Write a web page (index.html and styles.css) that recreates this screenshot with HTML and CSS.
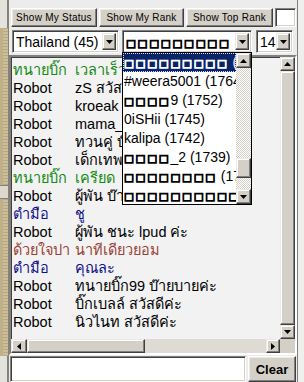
FILE: index.html
```html
<!DOCTYPE html>
<html lang="th">
<head>
    <meta charset="UTF-8">
    <meta name="viewport" content="width=device-width, initial-scale=1.0">
    <title>ห้องสนทนา</title>
    <link rel="stylesheet" href="styles.css">
</head>
<body>
    <div id="window">
        <!-- left splitter strip -->
        <div class="side-left">
            <div class="side-cap"></div>
            <div class="side-fill"></div>
            <div class="side-grip"></div>
            <div class="side-fill"></div>
            <div class="side-cap side-cap-bottom"></div>
        </div>

        <div id="main">
            <!-- top buttons -->
            <div class="toolbar">
                <button class="btn btn-status">Show My Status</button>
                <button class="btn btn-rank">Show My Rank</button>
                <button class="btn btn-top">Show Top Rank</button>
                <div class="field field-small"></div>
            </div>

            <!-- room / player / font size -->
            <div class="select-row">
                <div class="combo combo-country">
                    <span class="combo-text">Thailand (45)</span>
                    <span class="combo-arrow"><svg width="7" height="4" viewBox="0 0 7 4"><polygon points="0,0 7,0 3.5,4" fill="#000"/></svg></span>
                </div>
                <div class="combo combo-player">
                    <span class="combo-text"><span class="tofu">□□□□□□□□□</span> (1764)</span>
                    <span class="combo-arrow"><svg width="7" height="4" viewBox="0 0 7 4"><polygon points="0,0 7,0 3.5,4" fill="#000"/></svg></span>

                    <!-- open dropdown -->
                    <div class="droplist">
                        <div class="drop-items">
                            <div class="drop-item selected"><span class="tofu">□□□□□□□□□</span> (1770)</div>
                            <div class="drop-item">#weera5001 (1764)</div>
                            <div class="drop-item"><span class="tofu">□□□□</span>9 (1752)</div>
                            <div class="drop-item">0iSHii (1745)</div>
                            <div class="drop-item">kalipa (1742)</div>
                            <div class="drop-item"><span class="tofu">□□□□</span>_2 (1739)</div>
                            <div class="drop-item"><span class="tofu">□□□□□□□□</span> (1712)</div>
                            <div class="drop-item"><span class="tofu">□□□□□□□□□□</span> (1700)</div>
                        </div>
                        <div class="drop-scroll">
                            <div class="sb-btn"><svg width="7" height="4" viewBox="0 0 7 4"><polygon points="3.5,0 7,4 0,4" fill="#000"/></svg></div>
                            <div class="sb-gap"></div>
                            <div class="sb-thumb drop-thumb"></div>
                            <div class="sb-gap-low"></div>
                            <div class="sb-btn"><svg width="7" height="4" viewBox="0 0 7 4"><polygon points="0,0 7,0 3.5,4" fill="#000"/></svg></div>
                        </div>
                    </div>
                </div>
                <div class="combo combo-size">
                    <span class="combo-text">14</span>
                    <span class="combo-arrow"><svg width="7" height="4" viewBox="0 0 7 4"><polygon points="0,0 7,0 3.5,4" fill="#000"/></svg></span>
                </div>
            </div>

            <!-- chat log -->
            <div class="chat">
                <div class="chat-log">
                    <div class="msg"><span class="who c-green">ทนายบิ๊ก</span><span class="say c-green">เวลาเร็ว"จัง สวัสดีค่ะ</span></div>
                    <div class="msg"><span class="who">Robot</span><span class="say">zS สวัสดีค่ะ</span></div>
                    <div class="msg"><span class="who">Robot</span><span class="say">kroeak สวัสดีค่ะ</span></div>
                    <div class="msg"><span class="who">Robot</span><span class="say">mama_s สวัสดีค่ะ</span></div>
                    <div class="msg"><span class="who">Robot</span><span class="say">ทวนคู่ บ๊ายบายค่ะ</span></div>
                    <div class="msg"><span class="who">Robot</span><span class="say">เด็กเทพอ สวัสดีค่ะ</span></div>
                    <div class="msg"><span class="who c-green">ทนายบิ๊ก</span><span class="say c-green">เครียด</span></div>
                    <div class="msg"><span class="who">Robot</span><span class="say">ผู้พัน บ๊ายบายค่ะ</span></div>
                    <div class="msg"><span class="who c-navy">ตำมือ</span><span class="say c-navy">ชู</span></div>
                    <div class="msg"><span class="who">Robot</span><span class="say">ผู้พัน ชนะ lpud ค่ะ</span></div>
                    <div class="msg"><span class="who c-brown">ด้วยใจปา</span><span class="say c-brown">นาทีเดียวยอม</span></div>
                    <div class="msg"><span class="who c-navy">ตำมือ</span><span class="say c-navy">คุณละ</span></div>
                    <div class="msg"><span class="who">Robot</span><span class="say">ทนายบิ๊ก99 บ๊ายบายค่ะ</span></div>
                    <div class="msg"><span class="who">Robot</span><span class="say">บิ๊กเบลล์ สวัสดีค่ะ</span></div>
                    <div class="msg"><span class="who">Robot</span><span class="say">นิวไนท สวัสดีค่ะ</span></div>
                </div>
                <div class="vscroll">
                    <div class="sb-btn"><svg width="7" height="4" viewBox="0 0 7 4"><polygon points="3.5,0 7,4 0,4" fill="#000"/></svg></div>
                    <div class="sb-thumb vthumb"></div>
                    <div class="sb-btn"><svg width="7" height="4" viewBox="0 0 7 4"><polygon points="0,0 7,0 3.5,4" fill="#000"/></svg></div>
                </div>
                <div class="hscroll">
                    <div class="sb-btn sb-left"><svg width="4" height="7" viewBox="0 0 4 7"><polygon points="0,3.5 4,0 4,7" fill="#000"/></svg></div>
                    <div class="sb-thumb hthumb"></div>
                    <div class="htrack"></div>
                    <div class="sb-btn sb-right"><svg width="4" height="7" viewBox="0 0 4 7"><polygon points="0,0 4,3.5 0,7" fill="#000"/></svg></div>
                </div>
                <div class="corner"></div>
            </div>

            <!-- message input -->
            <div class="input-row">
                <div class="field chat-input"></div>
                <button class="btn btn-clear">Clear</button>
            </div>
        </div>

        <div class="side-right"></div>
    </div>
</body>
</html>
```

FILE: styles.css
```css
/* page */
body {
    margin: 0;
    background: #ececec;
    font-family: "Liberation Sans", Arial, sans-serif;
    overflow: hidden;
}
#window {
    display: flex;
    width: 304px;
    height: 382px;
}

/* left splitter strip */
.side-left {
    width: 8px;
    display: flex;
    flex-direction: column;
    border-right: 1px solid #8a8170;
}
.side-fill {
    flex: 1;
    background: #cbbe98 repeating-linear-gradient(0deg, rgba(90, 70, 30, .18) 0 1px, transparent 1px 3px);
    border-left: 3px solid #bfb08a;
}
.side-cap {
    height: 28px;
    background: #e4e2dc;
    border-right: 1px solid #808080;
}
.side-cap-bottom {
    height: 26px;
}
.side-grip {
    height: 12px;
    background: #dcd8cc;
    border-top: 1px solid #808080;
    border-bottom: 1px solid #808080;
}

#main {
    width: 288px;
    display: flex;
    flex-direction: column;
}
.side-right {
    flex: 1;
    background: #efefed;
    border-left: 1px solid #808080;
}

/* classic 3d controls */
.btn {
    background: #d4d0c8;
    border: 1px solid;
    border-color: #fff #404040 #404040 #fff;
    box-shadow: inset -1px -1px #808080, inset 1px 1px #eceae6;
    font-family: "Liberation Sans", Arial, sans-serif;
    font-size: 10px;
    letter-spacing: 0.25px;
    color: #000;
    padding: 0;
}
.field {
    background: #fff;
    border: 1px solid;
    border-color: #808080 #fff #fff #808080;
    box-shadow: inset 1px 1px #404040, inset -1px -1px #d4d0c8;
    box-sizing: border-box;
}

/* top buttons */
.toolbar {
    display: flex;
    gap: 2px;
    height: 19px;
    margin: 8px 0 0 2px;
}
.btn-status { width: 86px; }
.btn-rank { width: 85px; }
.btn-top { width: 87px; }
.field-small { width: 21px; }

/* combos */
.select-row {
    display: flex;
    height: 23px;
    margin: 3px 0 0 3px;
}
.combo {
    position: relative;
    display: flex;
    flex: none;
    box-sizing: border-box;
    padding: 2px;
    background: #fff;
    border: 1px solid;
    border-color: #808080 #fff #fff #808080;
    box-shadow: inset 1px 1px #404040, inset -1px -1px #d4d0c8;
}
.combo-country { width: 107px; }
.combo-player { width: 130px; margin-left: 3px; }
.combo-size { width: 37px; margin-left: 4px; }
.combo-text {
    flex: 1;
    min-width: 0;
    font-size: 14px;
    line-height: 18px;
    padding-left: 1px;
    white-space: nowrap;
    overflow: hidden;
}
.combo-arrow,
.sb-btn {
    display: flex;
    align-items: center;
    justify-content: center;
    box-sizing: border-box;
    background: #d4d0c8;
    border: 1px solid;
    border-color: #eceae6 #404040 #404040 #eceae6;
    box-shadow: inset -1px -1px #808080, inset 1px 1px #fff;
}
.combo-arrow {
    width: 14px;
    flex: none;
}
.tofu {
    font-family: "DejaVu Sans", sans-serif;
    font-size: 10.5px;
    letter-spacing: 1.7px;
    -webkit-text-stroke: 1.1px currentColor;
}

/* open dropdown list */
.droplist {
    position: absolute;
    top: 21px;
    left: -1px;
    width: 130px;
    height: 153px;
    box-sizing: border-box;
    border: 1px solid #000;
    background: #fff;
    display: flex;
    z-index: 5;
}
.drop-items {
    flex: 1;
    min-width: 0;
    overflow: hidden;
}
.drop-item {
    height: 19px;
    line-height: 19px;
    font-size: 14px;
    padding-left: 1px;
    white-space: nowrap;
    overflow: hidden;
}
.drop-item.selected {
    background: #0a246a;
    color: #fff;
    outline: 1px dotted #d8d8ff;
    outline-offset: -1px;
}
.drop-scroll {
    width: 15px;
    flex: none;
    display: flex;
    flex-direction: column;
    background: repeating-conic-gradient(#d4d0c8 0 25%, #fff 0 50%) 0 0 / 2px 2px;
}
.drop-scroll .sb-btn { height: 15px; }
.sb-gap { flex: 1; }
.sb-gap-low { height: 11px; }
.sb-thumb {
    box-sizing: border-box;
    background: #d4d0c8;
    border: 1px solid;
    border-color: #eceae6 #404040 #404040 #eceae6;
    box-shadow: inset -1px -1px #808080, inset 1px 1px #fff;
}
.drop-thumb { height: 20px; }

/* chat box */
.chat {
    height: 300px;
    margin-top: 2px;
    box-sizing: border-box;
    border: 2px solid;
    border-color: #808080 #fff #fff #808080;
    box-shadow: inset 1px 1px #404040;
    display: grid;
    grid-template-columns: minmax(0, 1fr) 15px;
    grid-template-rows: minmax(0, 1fr) 14px;
    background: #f2f2f2;
}
.chat-log {
    padding: 4px 0 0 2px;
    overflow: hidden;
}
.msg {
    display: flex;
    height: 18px;
    line-height: 18px;
    font-size: 14.5px;
    white-space: nowrap;
}
.who {
    width: 62px;
    flex: none;
}
.c-green { color: #138a13; }
.c-navy { color: #10108a; }
.c-brown { color: #9a4236; }

.vscroll {
    display: flex;
    flex-direction: column;
    background: #d4d0c8;
}
.vscroll .sb-btn { height: 14px; }
.vthumb { flex: 1; }
.hscroll {
    display: flex;
    background: #d4d0c8;
}
.sb-left { width: 16px; }
.sb-right { width: 14px; }
.hthumb { width: 118px; }
.htrack {
    flex: 1;
    background: #dedbd4;
}
.corner { background: #d4d0c8; }

/* bottom input */
.input-row {
    display: flex;
    gap: 2px;
    height: 26px;
    margin: 1px 0 0 1px;
}
.chat-input { width: 236px; }
.btn-clear {
    width: 48px;
    font-size: 13px;
    font-weight: bold;
    letter-spacing: 0;
}
```
